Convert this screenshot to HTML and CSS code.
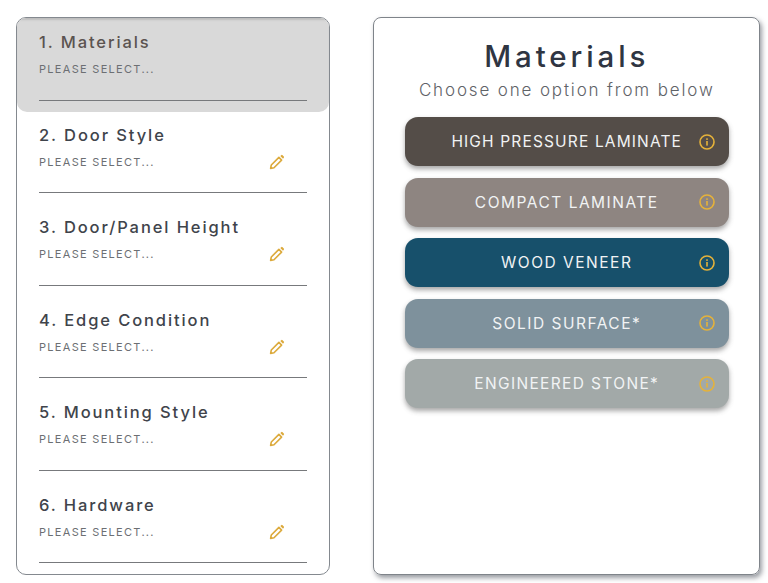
FILE: index.html
```html
<!DOCTYPE html>
<html lang="en">
<head>
  <meta charset="UTF-8" />
  <meta name="viewport" content="width=device-width, initial-scale=1.0" />
  <title>Materials</title>
  <link rel="stylesheet" href="styles.css">
</head>
<body>
  <svg class="icon-defs" width="0" height="0">
    <symbol id="pencil" viewBox="0 0 16 16">
      <path d="M1.6 14.4l.7-3.4 7.6-7.6 2.7 2.7-7.6 7.6z" fill="none" stroke="currentColor" stroke-width="1.6" stroke-linejoin="round"/>
      <path d="M11.3 2l.9-.8a1 1 0 0 1 1.4 0l1.2 1.2a1 1 0 0 1 0 1.4l-.8.9z" fill="currentColor"/>
    </symbol>
    <symbol id="info" viewBox="0 0 16 16">
      <circle cx="8" cy="8" r="7" fill="none" stroke="currentColor" stroke-width="1.6"/>
      <rect x="7.2" y="7" width="1.6" height="4.6" fill="currentColor"/>
      <rect x="7.2" y="4.3" width="1.6" height="1.6" fill="currentColor"/>
    </symbol>
  </svg>

  <div class="steps">
    <div class="step active">
      <h3>1. Materials</h3>
      <div class="step-row"><span>PLEASE SELECT...</span></div>
    </div>
    <div class="step">
      <h3>2. Door Style</h3>
      <div class="step-row"><span>PLEASE SELECT...</span><svg class="edit"><use href="#pencil"/></svg></div>
    </div>
    <div class="step">
      <h3>3. Door/Panel Height</h3>
      <div class="step-row"><span>PLEASE SELECT...</span><svg class="edit"><use href="#pencil"/></svg></div>
    </div>
    <div class="step">
      <h3>4. Edge Condition</h3>
      <div class="step-row"><span>PLEASE SELECT...</span><svg class="edit"><use href="#pencil"/></svg></div>
    </div>
    <div class="step">
      <h3>5. Mounting Style</h3>
      <div class="step-row"><span>PLEASE SELECT...</span><svg class="edit"><use href="#pencil"/></svg></div>
    </div>
    <div class="step">
      <h3>6. Hardware</h3>
      <div class="step-row"><span>PLEASE SELECT...</span><svg class="edit"><use href="#pencil"/></svg></div>
    </div>
  </div>

  <div class="panel">
    <h1>Materials</h1>
    <p>Choose one option from below</p>
    <div class="options">
      <button class="option hpl">HIGH PRESSURE LAMINATE<svg class="info"><use href="#info"/></svg></button>
      <button class="option compact">COMPACT LAMINATE<svg class="info"><use href="#info"/></svg></button>
      <button class="option veneer">WOOD VENEER<svg class="info"><use href="#info"/></svg></button>
      <button class="option solid">SOLID SURFACE*<svg class="info"><use href="#info"/></svg></button>
      <button class="option stone">ENGINEERED STONE*<svg class="info"><use href="#info"/></svg></button>
    </div>
  </div>
</body>
</html>
```

FILE: styles.css
```css
body {
  font-family: "Inter", "Open Sans", sans-serif;
  display: flex;
  align-items: flex-start;
  gap: 43.5px;
  width: 768px;
  height: 583px;
  box-sizing: border-box;
  margin: 0;
  padding: 17px 8px 0 16px;
  background: #fff;
  overflow: hidden;
}

.icon-defs {
  position: absolute;
}

.steps {
  flex: none;
  width: 313.5px;
  height: 558px;
  box-sizing: border-box;
  border: 1px solid #84898f;
  border-radius: 10px;
  overflow: hidden;
}

.step {
  height: 92.5px;
  box-sizing: border-box;
  padding: 13px 22px 0;
}

.step.active {
  height: 94px;
  margin-bottom: -1.5px;
  background: #d9d9d9;
  border-radius: 0 0 10px 10px;
  box-shadow: inset 0 3px 2px -1px #bdbdbd;
}

.step h3 {
  margin: 0;
  height: 22px;
  line-height: 22px;
  font-size: 16.5px;
  font-weight: 500;
  letter-spacing: 1.9px;
  color: #3f444b;
}

.step.active h3 {
  color: #5b5350;
}

.step-row {
  display: flex;
  justify-content: space-between;
  align-items: center;
  height: 47.5px;
  padding: 7px 22px 21px 0;
  box-sizing: border-box;
  border-bottom: 1px solid #77797c;
  font-size: 11px;
  letter-spacing: 1.3px;
  color: #6c6f73;
}

.edit {
  width: 16px;
  height: 16px;
  color: #dcaa3c;
}

.panel {
  flex: none;
  width: 387px;
  height: 558px;
  box-sizing: border-box;
  padding: 20px 30px 0 30.5px;
  border: 1px solid #7f848a;
  border-radius: 8px;
  box-shadow: 2px 3px 5px rgba(70, 75, 85, 0.55);
  text-align: center;
}

.panel h1 {
  margin: 0;
  height: 36px;
  line-height: 36px;
  font-size: 29.5px;
  font-weight: 500;
  letter-spacing: 3.9px;
  color: #2f3542;
}

.panel p {
  margin: 4px 0 0;
  height: 24px;
  line-height: 24px;
  font-size: 17px;
  font-weight: 300;
  letter-spacing: 1.85px;
  color: #5f6368;
}

.options {
  display: flex;
  flex-direction: column;
  gap: 11.5px;
  margin-top: 15px;
}

.option {
  position: relative;
  height: 49px;
  padding: 0;
  border: none;
  border-radius: 13px;
  font-family: inherit;
  font-size: 15.5px;
  font-weight: 400;
  letter-spacing: 1.5px;
  color: #f1f3f4;
  box-shadow: 0 3px 5px rgba(60, 60, 60, 0.45);
}

.info {
  position: absolute;
  top: 16.5px;
  right: 14px;
  width: 16px;
  height: 16px;
  color: #e5b23a;
}

.hpl { background: #544d48; letter-spacing: 1.15px; }
.compact { background: #8e8581; }
.veneer { background: #17506b; }
.solid { background: #7e919c; }
.stone { background: #a2a9a8; letter-spacing: 1.35px; }
```
